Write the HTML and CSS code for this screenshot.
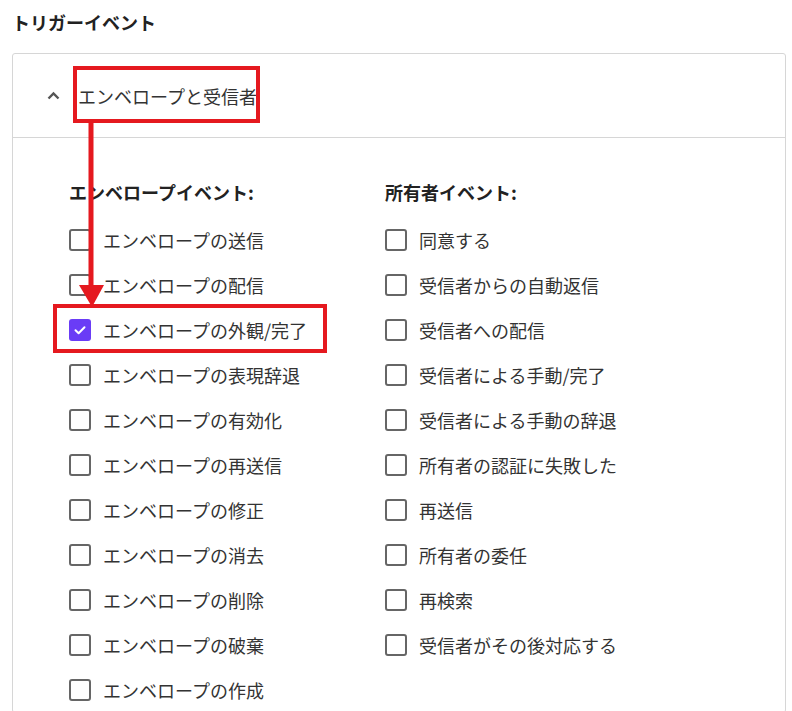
FILE: index.html
```html
<!DOCTYPE html>
<html lang="ja">
<head>
<meta charset="utf-8">
<link rel="stylesheet" href="styles.css">
</head>
<body>
<div class="page">
  <h2 class="title">トリガーイベント</h2>
  <div class="card">
    <div class="card-header">
      <svg class="chevron" width="13" height="9" viewBox="0 0 13 9"><path d="M1.5 7.5 L6.5 2.5 L11.5 7.5" fill="none" stroke="#555" stroke-width="2.4"/></svg>
      <span class="header-text">エンベロープと受信者</span>
    </div>
    <div class="card-body">
      <div class="column col-left">
        <div class="col-title">エンベロープイベント:</div>
        <label class="row"><span class="box"></span><span class="label">エンベロープの送信</span></label>
        <label class="row"><span class="box"></span><span class="label">エンベロープの配信</span></label>
        <label class="row"><span class="box checked"><svg width="22" height="22" viewBox="0 0 22 22"><path d="M6.5 11.2 L9.6 14.2 L15.5 8.2" fill="none" stroke="#fff" stroke-width="2" stroke-linecap="round" stroke-linejoin="round"/></svg></span><span class="label">エンベロープの外観/完了</span></label>
        <label class="row"><span class="box"></span><span class="label">エンベロープの表現辞退</span></label>
        <label class="row"><span class="box"></span><span class="label">エンベロープの有効化</span></label>
        <label class="row"><span class="box"></span><span class="label">エンベロープの再送信</span></label>
        <label class="row"><span class="box"></span><span class="label">エンベロープの修正</span></label>
        <label class="row"><span class="box"></span><span class="label">エンベロープの消去</span></label>
        <label class="row"><span class="box"></span><span class="label">エンベロープの削除</span></label>
        <label class="row"><span class="box"></span><span class="label">エンベロープの破棄</span></label>
        <label class="row"><span class="box"></span><span class="label">エンベロープの作成</span></label>
      </div>
      <div class="column col-right">
        <div class="col-title">所有者イベント:</div>
        <label class="row"><span class="box"></span><span class="label">同意する</span></label>
        <label class="row"><span class="box"></span><span class="label">受信者からの自動返信</span></label>
        <label class="row"><span class="box"></span><span class="label">受信者への配信</span></label>
        <label class="row"><span class="box"></span><span class="label">受信者による手動/完了</span></label>
        <label class="row"><span class="box"></span><span class="label">受信者による手動の辞退</span></label>
        <label class="row"><span class="box"></span><span class="label">所有者の認証に失敗した</span></label>
        <label class="row"><span class="box"></span><span class="label">再送信</span></label>
        <label class="row"><span class="box"></span><span class="label">所有者の委任</span></label>
        <label class="row"><span class="box"></span><span class="label">再検索</span></label>
        <label class="row"><span class="box"></span><span class="label">受信者がその後対応する</span></label>
      </div>
    </div>
  </div>

  <div class="annot annot-header"></div>
  <div class="annot annot-item"></div>
  <svg class="arrow" width="792" height="711" viewBox="0 0 792 711">
    <rect x="88.5" y="122" width="5" height="166" fill="#e5191f"/>
    <polygon points="79,285 104,285 92,307" fill="#e5191f"/>
  </svg>
</div>
</body>
</html>
```

FILE: styles.css
```css
* { box-sizing: border-box; }
html, body {
  margin: 0;
  padding: 0;
  background: #fff;
}
body {
  font-family: "Noto Sans CJK JP", "Noto Sans", sans-serif;
  color: #333;
  overflow: hidden;
}
.page {
  position: relative;
  width: 792px;
  height: 711px;
}
.title {
  margin: 0;
  padding: 9px 12px 0;
  font-size: 18px;
  line-height: 26px;
  font-weight: 700;
  color: #222;
}
.card {
  margin: 18px 6px 0 12px;
  border: 1px solid #d6d6d6;
  border-radius: 3px;
}
.card-header {
  height: 84px;
  display: flex;
  align-items: center;
  padding-left: 34px;
  border-bottom: 1px solid #d6d6d6;
}
.chevron {
  display: block;
  margin-right: 18px;
}
.header-text {
  font-size: 18px;
  color: #333;
}
.card-body {
  display: flex;
  padding: 41px 0 0 56px;
}
.column {
  display: flex;
  flex-direction: column;
}
.col-left { width: 316px; }
.col-title {
  font-size: 18px;
  font-weight: 700;
  line-height: 26px;
  color: #222;
  margin-bottom: 12px;
}
.row {
  height: 45px;
  display: flex;
  align-items: center;
  gap: 12px;
}
.box {
  width: 22px;
  height: 22px;
  border: 2px solid #666;
  border-radius: 3px;
  flex: none;
}
.box.checked {
  background: #6a3cf6;
  border: none;
}
.box.checked svg { display: block; }
.label {
  font-size: 18px;
  line-height: 24px;
  color: #333;
}
.annot {
  position: absolute;
  border: 4px solid #e5191f;
}
.annot-header {
  left: 73px;
  top: 66px;
  width: 187px;
  height: 57px;
}
.annot-item {
  left: 53px;
  top: 304px;
  width: 274px;
  height: 49px;
}
.arrow {
  position: absolute;
  left: 0;
  top: 0;
  pointer-events: none;
}
```
